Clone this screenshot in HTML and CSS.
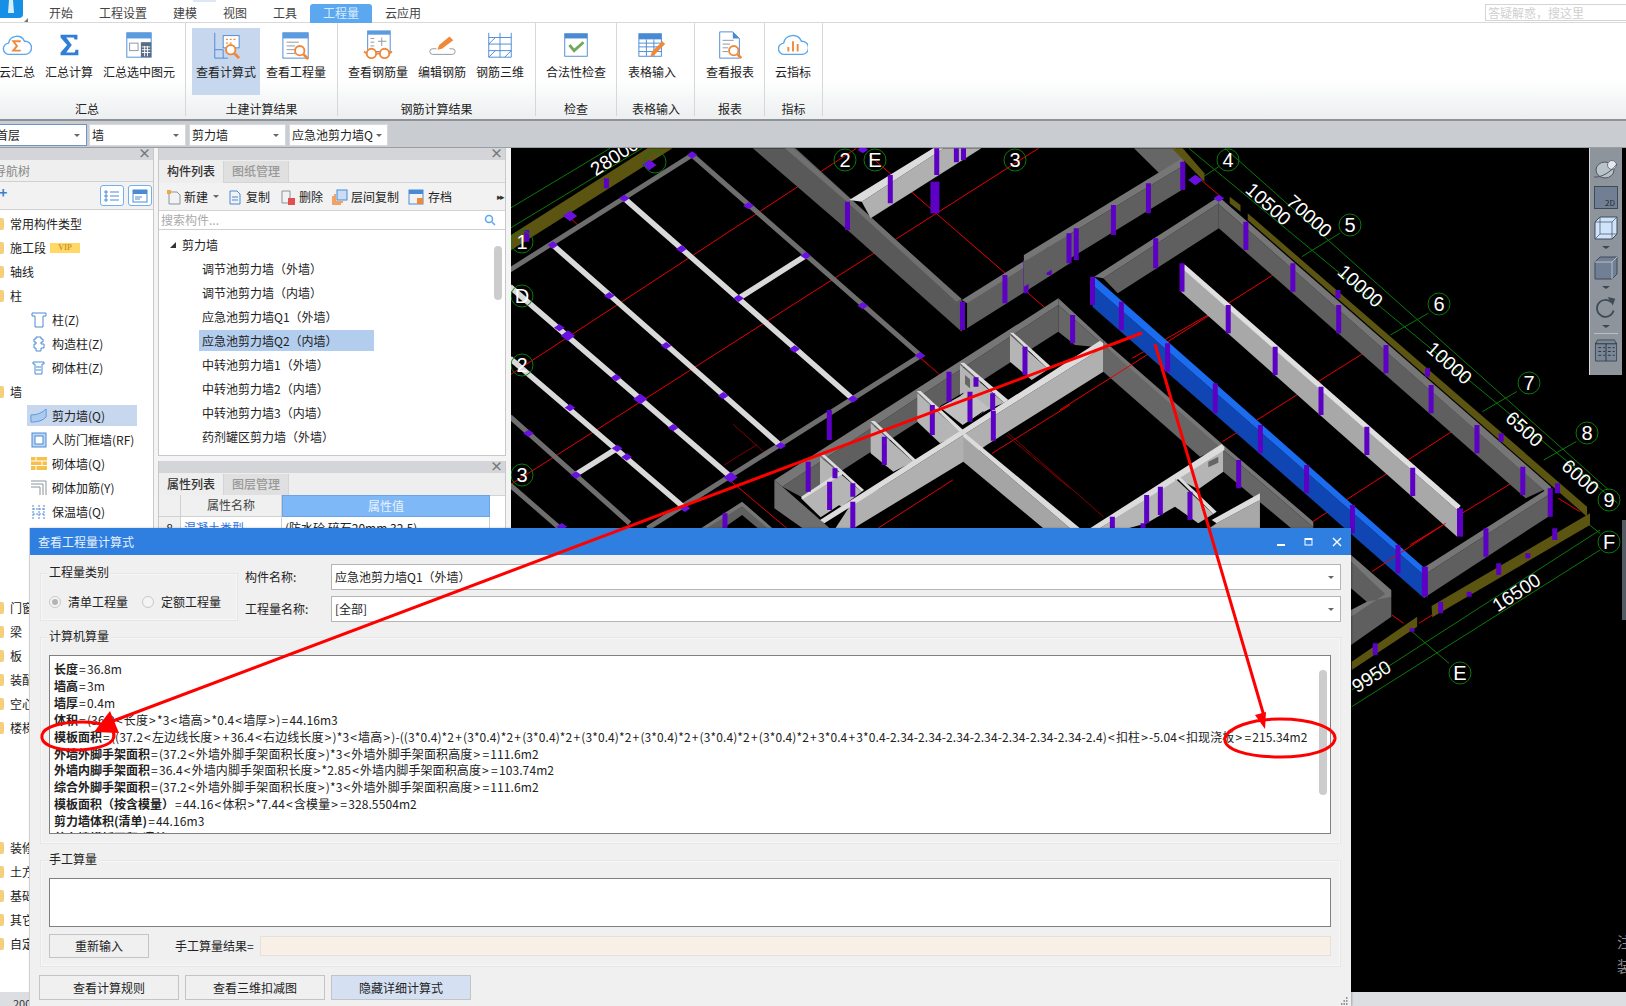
FILE: index.html
```html
<!DOCTYPE html>
<html lang="zh">
<head>
<meta charset="utf-8">
<title>查看工程量计算式</title>
<link rel="stylesheet" href="styles.css">
</head>
<body>
<div class="app">
  <header class="topbar">
    <div class="logo"><svg width="24" height="19" viewBox="0 0 24 19"><rect x="-4" y="-4" width="27" height="22" rx="4" fill="#1690e6"/><path d="M9 0h4l1 13h-6z" fill="#d6effc"/></svg></div>
    <i class="logo-mark"></i>
    <nav class="tabs">
      <span class="tab">开始</span><span class="tab">工程设置</span><span class="tab">建模</span><span class="tab">视图</span><span class="tab">工具</span><span class="tab active">工程量</span><span class="tab">云应用</span>
    </nav>
    <div class="ask">答疑解惑，搜这里</div>
  </header>

  <section class="ribbon">
    <div class="group g1">
      <div class="items">
        <div class="item"><svg class="ric" viewBox="0 0 32 32"><path class="bl2" d="M8 26a6 6 0 0 1-1-12 9 9 0 0 1 17-2 7 7 0 0 1 1 14z"/><path class="or2" d="M20 12h-8l4 5-4 5h8"/></svg><span>云汇总</span></div>
        <div class="item"><svg class="ric" viewBox="0 0 32 32"><path d="M7 5h18v5h-3l-1-2H13l6 8-6 8h9l1-3h3v6H7v-3l7-8-7-8z" fill="#2f7fd8"/></svg><span>汇总计算</span></div>
        <div class="item"><svg class="ric" viewBox="0 0 32 32"><rect x="3" y="3" width="26" height="26" fill="#fff" class="bl"/><rect x="3" y="3" width="26" height="6" fill="#5b9bdf"/><rect x="6" y="14" width="9" height="8" class="gr"/><rect x="18" y="13" width="11" height="16" fill="#5a6b84"/><path d="M19 18h9M19 21h9M19 24h9M22 17v11M25 17v11" stroke="#fff"/></svg><span>汇总选中图元</span></div>
      </div>
      <div class="glabel">汇总</div>
    </div>
    <div class="group g2">
      <div class="items">
        <div class="item on"><svg class="ric" viewBox="0 0 32 32"><path class="bl" d="M4 3v27h14M4 21h9v9"/><rect x="13" y="6" width="17" height="13" fill="#fff" class="bl"/><path d="M16 10h2m2 0h2m2 0h2M16 14h2m2 0h2" class="or"/><circle cx="21" cy="21" r="5" fill="#fff" class="or2"/><path d="M25 25l5 5" class="or3"/></svg><span>查看计算式</span></div>
        <div class="item"><svg class="ric" viewBox="0 0 32 32"><rect x="2" y="3" width="27" height="27" fill="#fff" class="bl"/><rect x="2" y="3" width="27" height="6" fill="#5b9bdf"/><path d="M6 13h13M6 17h9M6 21h9M6 25h9" class="gr"/><circle cx="20" cy="22" r="5" fill="#fff" class="or2"/><path d="M24 26l5 5" class="or3"/></svg><span>查看工程量</span></div>
      </div>
      <div class="glabel">土建计算结果</div>
    </div>
    <div class="group g3">
      <div class="items">
        <div class="item"><svg class="ric" viewBox="0 0 32 32"><rect x="5" y="1" width="24" height="22" fill="#fff" class="bl"/><rect x="5" y="1" width="24" height="4" fill="#5b9bdf"/><path d="M8 9h4M8 13h4M8 17h4M16 12h9M20 8v9" class="gr"/><circle cx="9" cy="25" r="5" fill="#fff" class="or2"/><circle cx="23" cy="25" r="5" fill="#fff" class="or2"/><path d="M14 25h4M4 25l-3 -2M28 25l3-2" class="or2"/></svg><span>查看钢筋量</span></div>
        <div class="item"><svg class="ric" viewBox="0 0 32 32"><path class="gr" d="M24 20h3a3 3 0 0 1 0 6H6a3 3 0 0 1 0-6h4"/><path d="M11 21l2-5 11-9 4 4-12 9z" fill="#f0883a"/></svg><span>编辑钢筋</span></div>
        <div class="item"><svg class="ric" viewBox="0 0 32 32"><path class="bl" d="M4 3v26M28 3v26M16 3v26M4 8h24M4 15h24M4 22h24M4 29h24M4 15l7-7M4 29l7-7M28 22l-7 7"/></svg><span>钢筋三维</span></div>
      </div>
      <div class="glabel">钢筋计算结果</div>
    </div>
    <div class="group g4">
      <div class="items">
        <div class="item"><svg class="ric" viewBox="0 0 32 32"><rect x="4" y="4" width="24" height="24" fill="#fff" class="bl"/><rect x="4" y="4" width="24" height="5" fill="#4a8ad4"/><path d="M9 16l5 6 10-9" class="gn"/></svg><span>合法性检查</span></div>
      </div>
      <div class="glabel">检查</div>
    </div>
    <div class="group g5">
      <div class="items">
        <div class="item"><svg class="ric" viewBox="0 0 32 32"><rect x="2" y="4" width="24" height="24" fill="#fff" class="bl"/><rect x="2" y="4" width="24" height="6" fill="#4a8ad4"/><path class="bl" d="M2 14h24M2 18h24M2 23h24M10 10v18M18 10v18"/><path d="M14 29l2-6 11-11 3 3-11 11z" fill="#f0883a"/></svg><span>表格输入</span></div>
      </div>
      <div class="glabel">表格输入</div>
    </div>
    <div class="group g6">
      <div class="items">
        <div class="item"><svg class="ric" viewBox="0 0 32 32"><path class="bl" d="M5 2h14l7 7v21H5z"/><path d="M19 2l7 7h-7z" fill="#4a8ad4"/><path d="M8 11h12M8 15h8M8 19h6M8 23h6" class="gr"/><circle cx="20" cy="22" r="5" fill="#fff" class="or2"/><path d="M24 26l4 4" class="or3"/></svg><span>查看报表</span></div>
      </div>
      <div class="glabel">报表</div>
    </div>
    <div class="group g7">
      <div class="items">
        <div class="item"><svg class="ric" viewBox="0 0 32 32"><path class="bl2" d="M7 26a6 6 0 0 1-1-12 10 10 0 0 1 19-2 7 7 0 0 1 1 14z"/><path d="M11 18v5M16 12v11M21 15v8" class="or2"/></svg><span>云指标</span></div>
      </div>
      <div class="glabel">指标</div>
    </div>
  </section>

  <section class="selbar">
    <div class="sel first"><span>首层</span><i class="caret"></i></div>
    <div class="sel"><span>墙</span><i class="caret"></i></div>
    <div class="sel"><span>剪力墙</span><i class="caret"></i></div>
    <div class="sel"><span>应急池剪力墙Q</span><i class="caret"></i></div>
  </section>

  <main class="work">
    <aside class="nav">
      <div class="pane-head"><span class="x">×</span></div>
      <div class="nav-title"><span>导航树</span></div>
      <div class="nav-tools">
        <span class="plus">+</span>
        <span class="navbtn"><svg width="16" height="14" viewBox="0 0 16 14"><path class="bl" d="M1 2h2v2H1zM6 3h9M1 6h2v2H1zM6 7h9M1 10h2v2H1zM6 11h9"/></svg></span>
        <span class="navbtn"><svg width="16" height="14" viewBox="0 0 16 14"><rect class="bl" x="1" y="1" width="14" height="12"/><rect x="1" y="1" width="14" height="4" fill="#4a8ad4"/><path class="bl" d="M3 8h7M3 10h5"/></svg></span>
      </div>
      <ul class="tree">
        <li class="folder">常用构件类型</li>
        <li class="folder">施工段<b class="vip">VIP</b></li>
        <li class="folder">轴线</li>
        <li class="folder">柱</li>
        <li class="leaf"><svg width="16" height="16" viewBox="0 0 16 16"><path class="bl" d="M1 1h14v3h-3v11H4V4H1z"/></svg>柱(Z)</li>
        <li class="leaf"><svg width="16" height="16" viewBox="0 0 16 16"><path class="bl" d="M5 1h5v2h2v3h-2v2h3v4h-3v3H5v-3H3V8h2V6H3V3h2z"/></svg>构造柱(Z)</li>
        <li class="leaf"><svg width="16" height="16" viewBox="0 0 16 16"><path class="bl" d="M2 2h11v2h-2v10H4V4H2zM5 7h5M5 10h5"/></svg>砌体柱(Z)</li>
        <li class="folder">墙</li>
        <li class="leaf on"><svg width="18" height="16" viewBox="0 0 18 16"><path class="bl" d="M1 7c6 0 11-2 15-6v8c-4 4-9 5-15 5z"/><path d="M1 7c6 0 11-2 15-6v8c-4 4-9 5-15 5z" fill="#8fbdf0" opacity=".5"/></svg>剪力墙(Q)</li>
        <li class="leaf"><svg width="16" height="16" viewBox="0 0 16 16"><rect x="1" y="1" width="14" height="14" fill="#bcd6f3"/><rect class="bl" x="1" y="1" width="14" height="14"/><rect x="4" y="4" width="8" height="8" fill="#fff"/><rect class="bl" x="4" y="4" width="8" height="8"/></svg>人防门框墙(RF)</li>
        <li class="leaf"><svg width="16" height="14" viewBox="0 0 16 14"><rect width="16" height="13" fill="#f7c04a"/><path d="M0 4h16M0 8.500h16M5 0v4M11 4v5M5 9v4" stroke="#fff"/></svg>砌体墙(Q)</li>
        <li class="leaf"><svg width="16" height="16" viewBox="0 0 16 16"><path class="gr" d="M0 1h15v14M0 4h12v11M0 7h9v8"/></svg>砌体加筋(Y)</li>
        <li class="leaf"><svg width="16" height="16" viewBox="0 0 16 16"><path class="bl" stroke-dasharray="2 1" d="M2 1v14M8 1v14M13 1v14M2 5h11M2 10h11"/></svg>保温墙(Q)</li>
        <li class="folder lower">门窗洞</li>
        <li class="folder">梁</li>
        <li class="folder">板</li>
        <li class="folder">装配式</li>
        <li class="folder">空心楼盖</li>
        <li class="folder">楼梯</li>
        <li class="folder lowest">装修</li>
        <li class="folder">土方</li>
        <li class="folder">基础</li>
        <li class="folder">其它</li>
        <li class="folder">自定义</li>
      </ul>
    </aside>

    <div class="midcol">
      <section class="pane list-pane">
        <div class="pane-head"><span class="x">×</span></div>
        <div class="ptabs"><span class="ptab cur">构件列表</span><span class="ptab">图纸管理</span></div>
        <div class="ptools">
          <span class="pt t-new"><svg width="16" height="16" viewBox="0 0 16 16"><path class="gr" d="M3 3h8l3 3v9H3z"/><path d="M1 1h4v4H1z" fill="#f5a540"/></svg>新建<i class="caret"></i></span>
          <span class="pt t-copy"><svg width="14" height="16" viewBox="0 0 14 16"><path class="bl" d="M2 2h7l3 3v10H2zM4 8h6M4 11h6"/></svg>复制</span>
          <span class="pt t-del"><svg width="16" height="16" viewBox="0 0 16 16"><path class="gr" d="M2 2h8v12H2z"/><rect x="8" y="9" width="7" height="7" fill="#e05050"/></svg>删除</span>
          <span class="pt t-cp"><svg width="16" height="16" viewBox="0 0 16 16"><rect x="5" y="1" width="10" height="10" fill="#c9def6"/><rect x="5" y="1" width="10" height="10" class="bl"/><path class="or" d="M3 5v8h8M1 7v8h8"/></svg>层间复制</span>
          <span class="pt t-save"><svg width="16" height="16" viewBox="0 0 16 16"><rect x="1" y="1" width="14" height="14" class="bl"/><rect x="1" y="1" width="14" height="4" fill="#4a8ad4"/><rect x="9" y="9" width="6" height="6" fill="#f0883a"/></svg>存档</span>
          <span class="more">▸▸</span>
        </div>
        <div class="search"><span>搜索构件...</span><svg width="12" height="12" viewBox="0 0 12 12"><circle cx="5" cy="5" r="3.500" class="bl2"/><path d="M8 8l3 3" class="bl2"/></svg></div>
        <div class="clist">
          <div class="croot"><i class="tri"></i>剪力墙</div>
          <div class="citem">调节池剪力墙（外墙）</div>
          <div class="citem">调节池剪力墙（内墙）</div>
          <div class="citem">应急池剪力墙Q1（外墙）</div>
          <div class="citem on">应急池剪力墙Q2（内墙）</div>
          <div class="citem">中转池剪力墙1（外墙）</div>
          <div class="citem">中转池剪力墙2（内墙）</div>
          <div class="citem">中转池剪力墙3（内墙）</div>
          <div class="citem">药剂罐区剪力墙（外墙）</div>
          <i class="cscroll"></i>
        </div>
      </section>
      <section class="pane prop-pane">
        <div class="pane-head"><span class="x">×</span></div>
        <div class="ptabs"><span class="ptab cur">属性列表</span><span class="ptab">图层管理</span></div>
        <div class="ptable">
          <span class="ph"></span><span class="ph">属性名称</span><span class="ph val">属性值</span>
          <span class="pc num">8</span><span class="pc link">混凝土类型</span><span class="pc">(防水砼 碎石20mm 32.5)</span>
        </div>
      </section>
    </div>

    <div class="canvas">
      <svg class="cad" viewBox="511 148 1115 844" width="1115" height="844">
        <defs>
          <path id="n" d="M0-11L15 0 0 11-15 0Z" fill="#6a10e0"/>
          <path id="N" d="M0-16L20 0 0 16-20 0Z" fill="#6a10e0"/>
        </defs>
        <g transform="translate(510 145) scale(.3571 .3333)">
          <path class="red" d="M0 690L970 10M0 1020L1480 10M620 1010L775 1150M1005 30L1500 490M1150 640L1210 695M165 215L190 240M1030 1150L1240 1005M1350 925L1568 780"/>
          <path class="redd" d="M625 838L710 920M600 960L690 900M1390 870L1568 1030"/>
          <path class="green" d="M0 190L280 10M0 250L370 10"/>
          <path class="olive" d="M0 272L385 10H455L0 318Z"/>
          <path class="tdark" d="M0 375L510 30L1150 632L385 1150M0 815L335 1135M0 1020L140 1150"/>
          <path class="tlight" d="M320 160L960 762M120 300L758 902M0 425L620 997M0 640L490 1090M640 460L828 332M185 988L300 910"/>
          <use href="#n" x="510" y="30"/><use href="#n" x="320" y="160"/><use href="#n" x="120" y="300"/><use href="#n" x="668" y="182"/><use href="#n" x="480" y="312"/><use href="#n" x="278" y="452"/><use href="#n" x="138" y="548"/><use href="#N" x="162" y="572"/><use href="#n" x="640" y="460"/><use href="#n" x="828" y="332"/><use href="#n" x="988" y="482"/><use href="#n" x="1148" y="632"/><use href="#n" x="437" y="602"/><use href="#n" x="797" y="612"/><use href="#n" x="960" y="762"/><use href="#n" x="597" y="752"/><use href="#n" x="297" y="698"/><use href="#N" x="365" y="762"/><use href="#n" x="168" y="788"/><use href="#n" x="457" y="848"/><use href="#n" x="758" y="902"/><use href="#N" x="618" y="997"/><use href="#n" x="52" y="865"/><use href="#n" x="300" y="910"/><use href="#n" x="327" y="936"/><use href="#n" x="185" y="990"/><use href="#n" x="490" y="1090"/><use href="#n" x="145" y="1145"/><use href="#N" x="168" y="213"/><use href="#N" x="390" y="60"/><use href="#n" x="988" y="14"/>
          <polygon class="f59" points="680,10 800,10 1265,465 1265,560 945,255"/>
          <polygon class="f70" points="770,10 795,10 1265,462 1250,470 945,172"/>
          <polygon class="fb0" points="985,170 1215,10 1320,10 1010,220"/>
          <polygon class="fdc" points="950,165 1185,10 1215,10 985,170"/>
          <polygon class="f5f" points="1280,550 1568,355 1568,275 1280,470"/>
          <polygon class="f75" points="1265,465 1568,262 1568,280 1280,475"/>
          <polygon class="f5f" points="535,1155 650,1085 735,1155 700,1155 650,1110 590,1155"/>
          <polygon class="f75" points="535,1150 650,1070 735,1150 722,1150 650,1085 550,1150"/>
          <path class="post" d="M47 255v35M270 100v30M1267 470v85M1386 390v85M1445 345v100M1510 305v85M1565 265v80M1195 10v80M1065 90v85M1250 10v42M1270 10v35M945 170v85M602 1105v45"/>
          <path class="post wide" d="M1190 110v95"/>
        </g>
        <g transform="translate(880 290) scale(.3333)">
          <path class="redd" d="M385 430L670 680M125 205L180 255"/>
          <polygon class="f5f" points="535,45 535,125 -237,620 -293,590"/>
          <polygon class="f75" points="535,25 535,45 -293,590 -317,570"/>
          <polygon class="f6e" points="-317,570 -317,655 -225,720 -145,720 -293,590"/>
          <polygon class="f66" points="535,45 670,165 655,172 585,165 535,125"/>
          <polygon class="f75" points="535,25 670,150 670,165 535,45"/>
          <polygon class="f66" points="670,165 1030,470 960,500 670,245"/>
          <polygon class="f75" points="670,150 1030,465 1030,480 670,165"/>
          <polygon class="f66" points="1030,480 1300,712 1300,770 1030,545"/>
          <polygon class="f75" points="1030,465 1300,695 1300,712 1030,480"/>
          <polygon class="fb5" points="390,135 505,238 455,270 390,215"/>
          <polygon class="fdc" points="390,128 400,128 515,232 505,238"/>
          <polygon class="fb5" points="240,225 372,338 310,365 240,315"/>
          <polygon class="fdc" points="240,218 252,218 385,330 372,338"/>
          <polygon class="fb5" points="112,310 245,430 180,460 112,395"/>
          <polygon class="fb5" points="-28,400 100,515 40,545 -28,490"/>
          <polygon class="fdc" points="-28,393 -16,393 108,510 100,515"/>
          <polygon class="fb5" points="-180,500 -55,605 -115,650 -180,610"/>
          <polygon class="fdc" points="-180,493 -168,493 -48,600 -55,605"/>
          <polygon class="fb5" points="-237,625 -114,547 -114,640 -178,682"/>
          <polygon class="fdc" points="-237,620 -114,540 -114,553 -232,628"/>
          <polygon class="fc0" points="180,352 265,305 330,355 248,405"/>
          <path class="blk" d="M180 350L250 310M248 408L310 365"/>
          <polygon class="fb0" points="670,172 670,245 320,465 250,515 -170,770 -85,640 0,595 250,435"/>
          <polygon class="fdc" points="660,152 670,160 670,172 250,435 0,595 -167,700 -180,690 0,575 245,420"/>
          <polygon class="fa5" points="250,440 250,515 490,715 570,715"/>
          <polygon class="fdc" points="250,425 600,715 570,715 250,440"/>
          <polygon class="fdc" points="110,303 122,303 255,425 245,432"/>
          <polygon class="fb5" points="1030,478 1030,545 955,598 890,565 885,650 800,700 745,715 660,715"/>
          <polygon class="fdc" points="1025,462 1033,470 1033,480 660,715 630,715"/>
          <polygon class="fb5" points="885,565 1000,672 955,700 885,650"/>
          <polygon class="fdc" points="885,558 897,558 1010,665 1000,672"/>
          <polygon class="fa8" points="1010,700 1140,630 1140,720 980,720"/>
          <polygon class="fdc" points="1140,610 1140,630 1010,700 995,690"/>
          <polygon class="f66" points="985,515 1015,500 1015,518 985,532"/>
          <polygon class="f66" points="255,255 270,268 270,295 255,282"/>
          <path class="post" d="M207 245v90M288 262v28M157 345v90M270 305v90M338 310v50M340 362v90M435 170v85M13 440v85"/>
          <path class="post" d="M-152 360v90"/>
        </g>
        <g transform="translate(510 145) scale(.3571 .3333)">
          <path class="post" d="M835 950v90M895 1010v85M960 1015v40M960 1070v80M910 970v30"/>
        </g>
        <g transform="translate(1060 145) scale(.361 .3333)">
          <path class="red" d="M0 795L590 390M450 890L840 625M700 1130L1085 860M970 1200L1250 1015M200 640L410 510M380 95L440 150M1380 1060L1440 1100"/>
          <path class="green" d="M357 10L1545 1075M457 10L1520 1035M440 65L390 100M775 265L670 335M1020 505L915 570M1265 740L1170 800M1430 890L1340 945"/>
          <polygon class="f66" points="205,10 320,10 345,45 340,60 275,85"/>
          <polygon class="f5f" points="-100,350 345,60 345,130 -100,425"/>
          <polygon class="f75" points="-100,330 335,42 345,60 -100,350"/>
          <polygon class="olive" points="310,10 340,10 400,85 400,110"/>
          <polygon class="olive" points="470,155 500,180 500,200 470,175"/>
          <polygon class="olive" points="520,205 1460,1085 1460,1115 520,225"/>
          <polygon class="f5f" points="120,400 440,175 440,250 160,445"/>
          <polygon class="f75" points="95,395 440,155 440,175 120,400"/>
          <polygon class="f5f" points="440,178 1340,1035 1290,1060 440,250"/>
          <polygon class="f75" points="440,155 1360,1025 1345,1040 440,178"/>
          <polygon class="fb" points="90,420 1008,1290 1008,1359 90,485"/>
          <polygon class="fbs" points="95,395 1008,1268 1008,1290 90,420"/>
          <polygon class="f5f" points="1360,1045 1360,1110 1008,1359 1008,1290"/>
          <polygon class="f75" points="1360,1025 1008,1268 1008,1290 1360,1045"/>
          <polygon class="fa8" points="340,370 1100,1095 1100,1175 335,440"/>
          <polygon class="fe0" points="345,358 1110,1082 1100,1095 340,372"/>
          <path class="post" d="M340 50v85M245 115v90M148 180v90M45 250v95M25 265v90M265 280v90M90 395v85M170 470v85M298 595v85M430 715v90M555 840v85M683 960v85M810 1080v85M515 230v85M645 355v85M772 480v85M903 600v85M1028 720v85M1155 840v85M1282 965v85M1358 1030v85M338 355v85M466 480v85M596 605v85M723 725v85M850 845v85M977 968v85M35 510v85M495 945v85M240 1050v85M278 1025v85M360 1040v85M145 1115v35M230 1135v15M770 435v25M1018 670v25M1222 865v25M1378 1015v30"/>
          <path class="post wide2" d="M1108 1090v85"/>
          <use href="#N" x="375" y="105"/>
          <use href="#n" x="440" y="160"/>
        </g>
        <g transform="translate(1100 520) scale(.3356 .3333)">
          <path class="red" d="M870 285L905 310M950 310L990 285M810 155L1030 10"/>
          <path class="green" d="M1490 30L750 510M1490 90L750 560M930 335L1040 430M1440 0L1490 40"/>
          <polygon class="f5f" points="748,125 868,230 868,290 748,375 748,290 795,245 748,205"/>
          <polygon class="f75" points="748,105 868,210 868,230 795,245 748,270 748,290 850,222 748,125"/>
          <polygon class="olive" points="1460,-20 988,258 990,292 1460,15"/>
          <polygon class="olive" points="945,290 750,425 750,450 945,320"/>
          <path class="post" d="M1015 245v35M820 370v35M1188 130v35M1355 25v35M1150 25v85M888 75v85M1275 100v15M1100 215v15M930 325v10"/>
          <path class="post wide3" d="M968 140v90"/>
        </g>
        <g class="rings">
          <circle cx="1228" cy="160" r="11"/><circle cx="1350" cy="225" r="11"/><circle cx="1439" cy="304" r="11"/><circle cx="1529" cy="383" r="11"/><circle cx="1587" cy="433" r="11"/><circle cx="1609" cy="500" r="11"/><circle cx="1609" cy="542" r="11"/><circle cx="1460" cy="673" r="11"/><circle cx="522" cy="242" r="11"/><circle cx="522" cy="296" r="11"/><circle cx="522" cy="365" r="11"/><circle cx="522" cy="475" r="11"/><circle cx="845" cy="160" r="11"/><circle cx="875" cy="160" r="11"/><circle cx="1015" cy="160" r="11"/><circle cx="655" cy="162" r="11"/>
        </g>
        <g class="axis">
          <text x="1228" y="167">4</text><text x="1350" y="232">5</text><text x="1439" y="311">6</text><text x="1529" y="390">7</text><text x="1587" y="440">8</text><text x="1609" y="507">9</text><text x="1609" y="549">F</text><text x="1460" y="680">E</text><text x="522" y="249">1</text><text x="522" y="303">D</text><text x="522" y="372">2</text><text x="522" y="482">3</text><text x="845" y="167">2</text><text x="875" y="167">E</text><text x="1015" y="167">3</text>
        </g>
        <g class="dims">
          <text transform="translate(618 162) rotate(-33)">28000</text>
          <text transform="translate(1264 209) rotate(42)">10500</text>
          <text transform="translate(1305 221) rotate(42)">70000</text>
          <text transform="translate(1356 291) rotate(42)">10000</text>
          <text transform="translate(1445 368) rotate(42)">10000</text>
          <text transform="translate(1520 434) rotate(42)">6500</text>
          <text transform="translate(1576 482) rotate(42)">6000</text>
          <text transform="translate(1520 598) rotate(-33)">16500</text>
          <text transform="translate(1375 682) rotate(-33)">9950</text>
        </g>
        <g class="faint"><text x="1617" y="948">注</text><text x="1617" y="972">装</text></g>
        <rect x="1622" y="520" width="4" height="100" fill="#555b62"/>
      </svg>
      <div class="viewbar">
        <svg class="v-globe" width="26" height="20" viewBox="0 0 26 20"><ellipse cx="12" cy="11" rx="9" ry="8" fill="#b9c1c9" stroke="#4d5661"/><circle cx="19" cy="6" r="4.500" fill="#e4e8ec" stroke="#6c7580"/><path d="M1 18c7 1 17-5 23-13" fill="none" stroke="#4d5661"/></svg>
        <div class="vb-2d">2D</div>
        <svg class="v-cube" width="24" height="24" viewBox="0 0 24 24"><path d="M1 6l5-5h17v17l-5 5H1z" fill="#cfe4fb" stroke="#3f4a57"/><path d="M1 6h17v17M18 6l5-5M6 1v17h17M1 23l5-5" fill="none" stroke="#3f4a57" stroke-width=".7"/></svg>
        <i class="vcaret"></i>
        <svg class="v-cube2" width="24" height="24" viewBox="0 0 24 24"><path d="M1 6l5-5h17v17l-5 5H1z" fill="#707f93" stroke="#3f4a57"/><path d="M1 6h17v17M18 6l5-5" fill="none" stroke="#c8d2dc" stroke-width=".8"/></svg>
        <i class="vcaret"></i>
        <svg class="v-rot" width="24" height="22" viewBox="0 0 24 26"><path d="M18 6a10 10 0 1 0 3 10" fill="none" stroke="#3f4a57" stroke-width="2"/><path d="M14 0l9 2-3 8z" fill="#3f4a57"/></svg>
        <i class="vcaret"></i>
        <hr class="vsep">
        <svg width="24" height="23" viewBox="0 0 24 24"><path d="M2 4l1-3h18l1 3h1v19H1V4z" fill="#7a8796" stroke="#3f4a57"/><path d="M1 5h22M4 9h3M9 9h2M14 9h3M19 9h2M4 13h3M9 13h2M14 13h3M19 13h2M4 17h3M9 17h2M14 17h3M19 17h2M12 5v18" stroke="#232b34" stroke-width=".9"/></svg>
      </div>
    </div>
  </main>
  <footer class="status"><span>200</span></footer>

  <section class="dialog">
    <div class="dtitle">
      <span>查看工程量计算式</span>
      <div class="wbtns">
        <svg width="10" height="10" viewBox="0 0 10 10"><rect x="1" y="7" width="8" height="2" fill="#fff"/></svg>
        <svg width="10" height="10" viewBox="0 0 10 10"><rect x="1" y="1.500" width="7" height="6.500" fill="none" stroke="#fff"/><rect x="1" y="1" width="7" height="2" fill="#fff"/></svg>
        <svg width="10" height="10" viewBox="0 0 10 10"><path d="M1 1l8 8M9 1L1 9" stroke="#fff" stroke-width="1.400"/></svg>
      </div>
    </div>
    <div class="dbody">
      <div class="dtop">
        <div class="gbox kind">
          <span class="legend">工程量类别</span>
          <label class="radio"><i class="dot sel-dot"></i>清单工程量</label>
          <label class="radio"><i class="dot"></i>定额工程量</label>
        </div>
        <div class="dfields">
          <div class="frow"><span class="flabel">构件名称:</span><div class="finput">应急池剪力墙Q1（外墙）<i class="caret"></i></div></div>
          <div class="frow"><span class="flabel">工程量名称:</span><div class="finput">[全部]<i class="caret"></i></div></div>
        </div>
      </div>
      <div class="gbox auto">
        <span class="legend">计算机算量</span>
        <div class="formula">
          <p><b>长度</b><u>=</u>36.8m</p>
          <p><b>墙高</b><u>=</u>3m</p>
          <p><b>墙厚</b><u>=</u>0.4m</p>
          <p><b>体积</b><u>=</u>(36.8<u>&lt;</u>长度<u>&gt;</u>*3<u>&lt;</u>墙高<u>&gt;</u>*0.4<u>&lt;</u>墙厚<u>&gt;</u>)<u>=</u>44.16m3</p>
          <p><b>模板面积</b><u>=</u>((37.2<u>&lt;</u>左边线长度<u>&gt;</u><u>+</u>36.4<u>&lt;</u>右边线长度<u>&gt;</u>)*3<u>&lt;</u>墙高<u>&gt;</u>)-((3*0.4)*2<u>+</u>(3*0.4)*2<u>+</u>(3*0.4)*2<u>+</u>(3*0.4)*2<u>+</u>(3*0.4)*2<u>+</u>(3*0.4)*2<u>+</u>(3*0.4)*2<u>+</u>3*0.4<u>+</u>3*0.4-2.34-2.34-2.34-2.34-2.34-2.34-2.34-2.4)<u>&lt;</u>扣柱<u>&gt;</u>-5.04<u>&lt;</u>扣现浇板<u>&gt;</u><u>=</u>215.34m2</p>
          <p><b>外墙外脚手架面积</b><u>=</u>(37.2<u>&lt;</u>外墙外脚手架面积长度<u>&gt;</u>)*3<u>&lt;</u>外墙外脚手架面积高度<u>&gt;</u><u>=</u>111.6m2</p>
          <p><b>外墙内脚手架面积</b><u>=</u>36.4<u>&lt;</u>外墙内脚手架面积长度<u>&gt;</u>*2.85<u>&lt;</u>外墙内脚手架面积高度<u>&gt;</u><u>=</u>103.74m2</p>
          <p><b>综合外脚手架面积</b><u>=</u>(37.2<u>&lt;</u>外墙外脚手架面积长度<u>&gt;</u>)*3<u>&lt;</u>外墙外脚手架面积高度<u>&gt;</u><u>=</u>111.6m2</p>
          <p><b>模板面积（按含模量）</b><u>=</u>44.16<u>&lt;</u>体积<u>&gt;</u>*7.44<u>&lt;</u>含模量<u>&gt;</u><u>=</u>328.5504m2</p>
          <p><b>剪力墙体积(清单)</b><u>=</u>44.16m3</p>
          <p><b>剪力墙模板面积(清单)</b><u>=</u>215.34m2</p>
          <i class="fscroll"></i>
        </div>
      </div>
      <div class="gbox manual">
        <span class="legend">手工算量</span>
        <div class="mtext"></div>
        <div class="mrow">
          <button class="btn small" type="button">重新输入</button>
          <span class="mlabel">手工算量结果=</span>
          <div class="mresult"></div>
        </div>
      </div>
      <div class="dbtns">
        <button class="btn wide" type="button">查看计算规则</button>
        <button class="btn wide" type="button">查看三维扣减图</button>
        <button class="btn wide hi" type="button">隐藏详细计算式</button>
      </div>
    </div>
    <svg class="grip" width="9" height="9" viewBox="0 0 9 9"><path d="M7 1h1.500M4.500 4H6M7 4h1.500M2 7h1.500M4.500 7H6M7 7h1.500" stroke="#777" stroke-width="1.500"/></svg>
  </section>

  <svg class="marks" viewBox="0 0 1626 1006" width="1626" height="1006">
    <path class="mk" d="M1142 333L105 724"/>
    <polygon class="mkf" points="94,732 110,711 119,733"/>
    <path class="mk" d="M42 735c2-8 18-13 40-13 25 0 33 8 32 15-2 9-22 13-40 13-20 0-34-6-32-15z"/>
    <path class="mk" d="M1155 344L1264 716"/>
    <polygon class="mkf" points="1265,729 1255,715 1266,712"/>
    <path class="mk" d="M1225 738c3-10 25-19 55-19 32 0 56 9 55 20-2 11-25 18-55 18-34 0-57-8-55-19z"/>
  </svg>
</div>
</body>
</html>
```
FILE: styles.css
```css
* { box-sizing: border-box; }
html, body { margin: 0; padding: 0; }
body { width: 1626px; height: 1006px; overflow: hidden; background: #f4f4f4; font: 12px/16px "Noto Sans CJK SC", "Noto Sans", sans-serif; color: #222; }
.app { position: relative; width: 1626px; height: 1006px; overflow: hidden; display: flex; flex-direction: column; }
ul { list-style: none; margin: 0; padding: 0; }
p { margin: 0; }

.bl { fill: none; stroke: #4a8ad4; stroke-width: 1; }
rect.bl[fill="#fff"] { fill: #fff; }
.bl2 { fill: none; stroke: #5aa7ee; stroke-width: 1.500; }
.or { fill: none; stroke: #f0883a; stroke-width: 1.500; }
.or2 { fill: none; stroke: #f0883a; stroke-width: 2; }
circle.or2[fill="#fff"] { fill: #fff; }
.or3 { fill: none; stroke: #f0883a; stroke-width: 3; }
.gr { fill: none; stroke: #8b949e; stroke-width: 1; }
.gn { fill: none; stroke: #71a85c; stroke-width: 3; }

.topbar { height: 23px; flex: none; background: #fff; border-bottom: 1px solid #d9d9d9; display: flex; position: relative; }
.logo { width: 24px; height: 19px; overflow: hidden; }
.logo-mark { position: absolute; left: 24px; top: 18px; border-style: solid; border-width: 0 0 4px 4px; border-color: transparent transparent #777 transparent; }
.topbar::before { content: ""; position: absolute; left: 193px; top: 0; width: 23px; height: 2px; background: #dde7f5; }
.tabs { display: flex; margin-left: 12px; }
.tab { padding: 0 13px; line-height: 18px; margin-top: 4px; height: 19px; color: #444; }
.tab.active { background: #5ba7f0; color: #d9ecff; border-radius: 3px 3px 0 0; }
.ask { margin-left: auto; margin-top: 4px; height: 17px; width: 141px; border: 1px solid #d4d4d4; border-right: 0; padding-left: 2px; line-height: 15px; color: #cfcfcf; }

.ribbon { height: 98px; flex: none; background: linear-gradient(#fff 0, #fff 58%, #eceff0 100%); border-bottom: 2px solid #8e9196; display: flex; overflow: hidden; }
.group { padding: 5px 6px 0; border-right: 1px solid #d5d7d9; margin-bottom: 3px; flex: none; display: flex; flex-direction: column; }
.g1 { width: 197px; margin-left: -11px; }
.g2 { width: 152px; }
.g3 { width: 198px; }
.g4 { width: 81px; }
.g5 { width: 78px; padding-left: 7px; }
.g6 { width: 70px; padding-left: 7px; }
.g7 { width: 58px; }
.items { display: flex; gap: 2px; height: 67px; }
.item { padding: 0 4px; display: flex; flex-direction: column; align-items: center; height: 67px; white-space: nowrap; }
.item.on { background: #c6d7ee; }
.ric { width: 30px; height: 30px; margin: 2px 0 4px; flex: none; }
.glabel { text-align: center; line-height: 16px; margin-top: 6px; }

.selbar { height: 27px; flex: none; background: #c9ccd1; border-bottom: 1px solid #9a9da2; display: flex; gap: 2px; padding: 3px 0 0; }
.sel { height: 22px; width: 97px; background: #fff; border: 1px solid #d5d8dc; display: flex; align-items: center; justify-content: space-between; padding: 0 6px 1px 2px; white-space: nowrap; }
.sel .caret { margin-top: 1px; }
.sel:last-child { width: 99px; padding-right: 5px; margin-left: 1px; }
.sel:nth-child(3) { margin-left: 1px; }
.sel.first { width: 88px; margin-left: -1px; border-color: #6f94c8; padding-left: 0; }
.sel.first span { margin-left: -4px; }
.caret { display: inline-block; border-style: solid; border-width: 3px 3.500px 0; border-color: #666 transparent transparent; flex: none; }

.work { flex: 1; min-height: 0; display: flex; }
.pane-head { height: 12px; background: #d3d5d9; position: relative; flex: none; }
.x { position: absolute; right: 2px; top: -3px; color: #777; font-size: 13px; font-weight: 700; line-height: 16px; }

.nav { width: 154px; flex: none; background: #fff; border-right: 1px solid #c9c9c9; display: flex; flex-direction: column; overflow: hidden; }
.nav-title { height: 22px; background: #efefef; border-bottom: 1px solid #d0d0d0; color: #888; line-height: 21px; flex: none; }
.nav-title span { margin-left: -6px; }
.nav-tools { height: 28px; background: #f2f2f2; border-bottom: 1px solid #d0d0d0; display: flex; gap: 4px; align-items: center; flex: none; position: relative; padding-left: 100px; }
.plus { position: absolute; left: -1px; top: 2px; color: #3a7fd0; font-weight: 700; font-size: 14px; }
.navbtn { width: 24px; height: 21px; border: 1px solid #6fb0ee; border-radius: 3px; background: #fff; display: flex; align-items: center; justify-content: center; }
.tree { padding-top: 2px; }
.tree li { height: 24px; line-height: 24px; white-space: nowrap; display: flex; align-items: center; }
.folder { padding-left: 10px; position: relative; }
.folder::before { content: ""; position: absolute; left: -8px; top: 6px; width: 12px; height: 12px; background: #f5cf7c; border-radius: 2px; }
.folder.lower { margin-top: 72px; }
.folder.lowest { margin-top: 96px; }
.vip { margin-left: 4px; width: 30px; height: 10px; background: #ffd867; color: #d09a28; font: 700 8px/10px "Liberation Serif", serif; text-align: center; }
.leaf { padding-left: 31px; gap: 5px; }
.leaf svg { flex: none; }
.tree .leaf.on { background: #c6d7ee; width: 110px; margin-left: 27px; padding-left: 3px; gap: 4px; height: 21px; margin-top: 1px; margin-bottom: 2px; }

.midcol { width: 348px; flex: none; margin-left: 4px; display: flex; flex-direction: column; gap: 5px; }
.pane { border: 1px solid #c8c8c8; border-top: 0; background: #fff; display: flex; flex-direction: column; }
.list-pane { height: 308px; }
.prop-pane { flex: 1; min-height: 0; }
.ptabs { height: 23px; background: #eee; border-bottom: 1px solid #d4d4d4; display: flex; flex: none; padding-top: 1px; }
.ptab { width: 65px; text-align: center; line-height: 20px; background: #e0e0e0; color: #999; border-right: 1px solid #d4d4d4; font-weight: 500; }
.ptab.cur { background: #eee; color: #333; margin-bottom: -1px; }
.ptools { height: 28px; background: #f2f2f2; border-bottom: 1px solid #d4d4d4; position: relative; display: flex; align-items: center; flex: none; padding-left: 7px; }
.pt { display: flex; align-items: center; gap: 3px; white-space: nowrap; }
.t-new { gap: 2px; }
.t-new .caret { margin-left: 3px; }
.t-copy { margin-left: 9px; gap: 4px; }
.t-del { margin-left: 10px; }
.t-cp { margin-left: 9px; }
.t-save { margin-left: 9px; gap: 4px; }
.more { margin-left: auto; margin-right: 2px; font-size: 9px; letter-spacing: -2px; color: #333; }
.search { height: 19px; border-bottom: 1px solid #d0d0d0; color: #aaa; padding: 0 9px 0 2px; display: flex; justify-content: space-between; align-items: center; flex: none; }
.clist { position: relative; flex: 1; padding-top: 3px; }
.croot { height: 24px; line-height: 24px; padding-left: 23px; position: relative; }
.tri { position: absolute; left: 11px; top: 9px; border-style: solid; border-width: 0 0 6px 6px; border-color: transparent transparent #333 transparent; }
.citem { height: 24px; line-height: 24px; padding-left: 43px; white-space: nowrap; }
.citem.on { background: #b3cdee; width: 175px; margin-left: 40px; padding-left: 3px; height: 21px; line-height: 21px; margin-top: 1px; margin-bottom: 2px; }
.cscroll { position: absolute; right: 3px; top: 16px; width: 8px; height: 54px; background: #ccc; border-radius: 4px; }
.ptable { display: grid; grid-template-columns: 22px 101px 208px; grid-auto-rows: 22px; margin-top: -1px; }
.ph { background: #f0f0f0; border-right: 1px solid #d0d0d0; border-bottom: 1px solid #d0d0d0; text-align: center; line-height: 20px; color: #444; }
.ph.val { background: #7fb8f6; color: #e8f3ff; border: 1px solid #6aa4e4; }
.pc { border-right: 1px solid #d0d0d0; padding-left: 3px; line-height: 21px; white-space: nowrap; overflow: hidden; }
.num { text-align: center; padding: 0; background: #f0f0f0; }
.link { color: #2f6fe0; }

.canvas { position: relative; margin-left: 5px; flex: 1; min-width: 0; background: #000; overflow: hidden; }
.cad { display: block; }
.cad path, .cad polygon { vector-effect: non-scaling-stroke; }
.red, .redd, .green, .blk { fill: none; }
.red { stroke: #e80000; stroke-width: 1; }
.redd { stroke: #800000; stroke-width: 1; }
.green { stroke: #0a7a0a; stroke-width: 1; }
.blk { stroke: #000; stroke-width: 1; }
.olive { fill: #5c5512; }
.tdark { fill: none; stroke: #6e6e6e; stroke-width: 5; }
.tlight { fill: none; stroke: #d9d9d9; stroke-width: 5.500; }
.f59 { fill: #595959; } .f5f { fill: #5f5f5f; } .f66 { fill: #666; } .f6e { fill: #6e6e6e; } .f70 { fill: #707070; } .f75 { fill: #767676; }
.fa5 { fill: #a5a5a5; } .fa8 { fill: #a8a8a8; } .fb0 { fill: #b0b0b0; } .fb5 { fill: #b5b5b5; } .fc0 { fill: #c0c0c0; } .fdc { fill: #dcdcdc; } .fe0 { fill: #e0e0e0; }
.fb { fill: #1046b4; } .fbs { fill: #1c6cf0; }
.post { fill: none; stroke: #5b00c4; stroke-width: 5; }
.wide { stroke-width: 9; }
.wide2 { stroke-width: 6; }
.wide3 { stroke-width: 6; }
.rings circle { fill: none; stroke: #0a7a0a; stroke-width: 1; }
.axis text { fill: #fff; font: 20px "Liberation Sans", sans-serif; text-anchor: middle; }
.dims text { fill: #fff; font: 19px "Liberation Sans", sans-serif; text-anchor: middle; }
.faint text { fill: #8a8a8a; font: 15px "Noto Sans CJK SC", sans-serif; }
.viewbar { position: absolute; left: 1078px; top: 0; width: 33px; height: 227px; background: #8e949b; border-left: 1px solid #d8d8d8; display: flex; flex-direction: column; align-items: center; padding-top: 11px; }
.vb-2d { width: 24px; height: 23px; margin-top: 7px; background: #707f93; border: 1px solid #3f4a57; color: #20262e; font-size: 8px; line-height: 10px; text-align: right; padding: 11px 2px 0 0; flex: none; }
.v-cube { margin-top: 7px; flex: none; }
.v-cube2 { margin-top: 7px; flex: none; }
.v-rot { margin-top: 8px; flex: none; }
.vcaret { border-style: solid; border-width: 3px 4px 0; border-color: #3c4650 transparent transparent; margin-top: 6px; flex: none; }
.vsep { width: 24px; margin: 5px 0 5px; border: 0; border-top: 1px solid #b8bec4; flex: none; }

.status { height: 14px; flex: none; background: #dddee1; padding-left: 13px; line-height: 22px; overflow: hidden; color: #333; font-size: 11px; }

.dialog { position: absolute; left: 29px; top: 528px; width: 1322px; height: 478px; background: #f0f0f0; border-left: 1px solid #d0d0d0; box-shadow: 1px 0 2px rgba(0,0,0,.25); }
.dtitle { height: 27px; background: #2f7fe0; color: #e6f1fd; display: flex; align-items: center; justify-content: space-between; padding: 0 9px 0 8px; }
.wbtns { display: flex; gap: 18px; }
.dbody { padding: 0 10px; }
.dtop { display: flex; padding-top: 9px; height: 82px; }
.gbox { border: 2px solid #f7f7f7; outline: 1px solid #e6e6e6; outline-offset: -1px; position: relative; }
.legend { position: absolute; left: 5px; top: -11px; background: #f0f0f0; padding: 0 2px; line-height: 16px; white-space: nowrap; }
.kind { width: 198px; height: 48px; margin-top: 9px; display: flex; align-items: center; padding: 10px 0 0 7px; flex: none; }
.radio { display: flex; align-items: center; gap: 7px; width: 93px; color: #222; white-space: nowrap; }
.dot { width: 12px; height: 12px; border: 1px solid #c8c8c8; border-radius: 50%; background: #f4f4f4; flex: none; position: relative; }
.sel-dot::after { content: ""; position: absolute; left: 2px; top: 2px; width: 6px; height: 6px; border-radius: 50%; background: #b4b4b4; }
.dfields { flex: 1; display: flex; flex-direction: column; gap: 6px; padding-left: 7px; }
.frow { display: flex; align-items: center; height: 26px; }
.flabel { width: 86px; flex: none; }
.finput { flex: 1; height: 26px; background: #fff; border: 1px solid #b5b5b5; padding-left: 3px; line-height: 24px; display: flex; justify-content: space-between; align-items: center; padding-right: 6px; }
.auto { height: 207px; padding: 16px 8px 0 7px; }
.formula { height: 179px; background: #fff; border: 1px solid #808080; padding: 5px 0 0 4px; overflow: hidden; position: relative; line-height: 16.900px; white-space: nowrap; color: #222; letter-spacing: .1px; }
.formula b { font-weight: 700; letter-spacing: 0; }
.formula u { text-decoration: none; padding: 0 1.100px; }
.fscroll { position: absolute; left: 1269px; top: 14px; width: 8px; height: 125px; background: #ccc; border-radius: 4px; }
.manual { margin-top: 16px; height: 107px; padding: 16px 8px 0 7px; }
.mtext { height: 49px; background: #fff; border: 1px solid #808080; }
.mrow { display: flex; align-items: center; margin-top: 7px; height: 24px; }
.mlabel { margin-left: 26px; white-space: nowrap; }
.mresult { flex: 1; height: 20px; margin-left: 6px; background: #f8f0e6; border: 1px solid #e6e0d8; }
.btn { font: inherit; color: #222; background: #f0f0f0; border: 1px solid #c4c4c4; padding: 0; }
.small { width: 100px; height: 24px; }
.dbtns { display: flex; gap: 6px; margin-top: 8px; margin-left: -1px; }
.btn.wide { width: 140px; height: 25px; }
.btn.hi { background: #d5e1f2; }
.grip { position: absolute; right: 3px; bottom: 0; }

.marks { position: absolute; left: 0; top: 0; pointer-events: none; }
.mk { fill: none; stroke: #f00; stroke-width: 3; }
.mkf { fill: #f00; }
```
